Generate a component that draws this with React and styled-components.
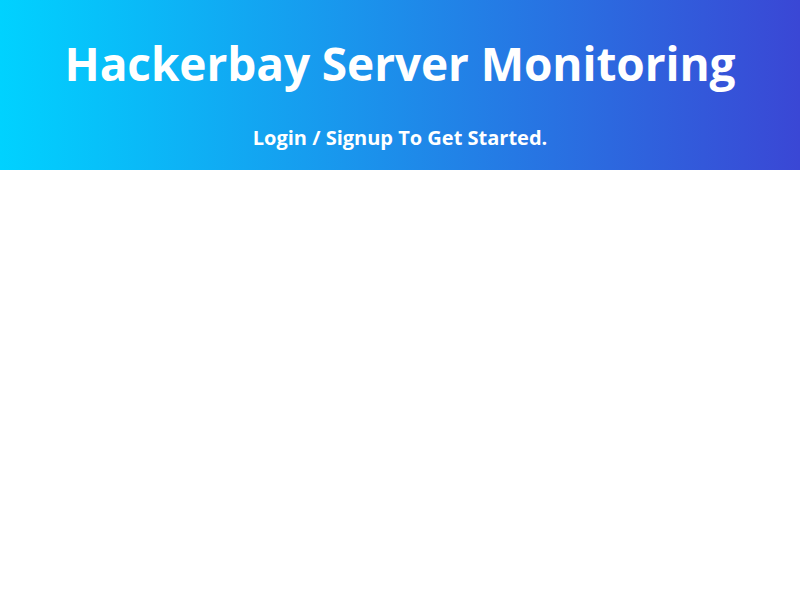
import React from 'react';
import styled, { createGlobalStyle } from 'styled-components';

const GlobalStyle = createGlobalStyle`
    html, body {
        margin: 0;
        padding: 0;
        background: #ffffff;
        font-family: "Open Sans", "Noto Sans", sans-serif;
    }
`;

const App = () => {
  return (
    <Container>
        <GlobalStyle />
        <Header>
            <Title>Hackerbay Server Monitoring</Title>
            <Subtitle>Login / Signup To Get Started.</Subtitle>
        </Header>
    </Container>
  );
};

const Container = styled.section`
    width: 100%;
    min-height: 600px;
    background: #ffffff;
`;

const Header = styled.header`
    height: 170px;
    box-sizing: border-box;
    display: flex;
    flex-direction: column;
    align-items: center;
    padding-top: 31px;
    background: linear-gradient(to right, #00d2ff, #3a47d5);
    color: #ffffff;
`;

const Title = styled.h1`
    margin: 0;
    font-size: 46px;
    line-height: 64px;
    font-weight: 700;
    letter-spacing: -0.1px;
`;

const Subtitle = styled.p`
    margin: 0;
    margin-top: 29px;
    font-size: 20px;
    line-height: 28px;
    font-weight: 700;
`;

export default App;
